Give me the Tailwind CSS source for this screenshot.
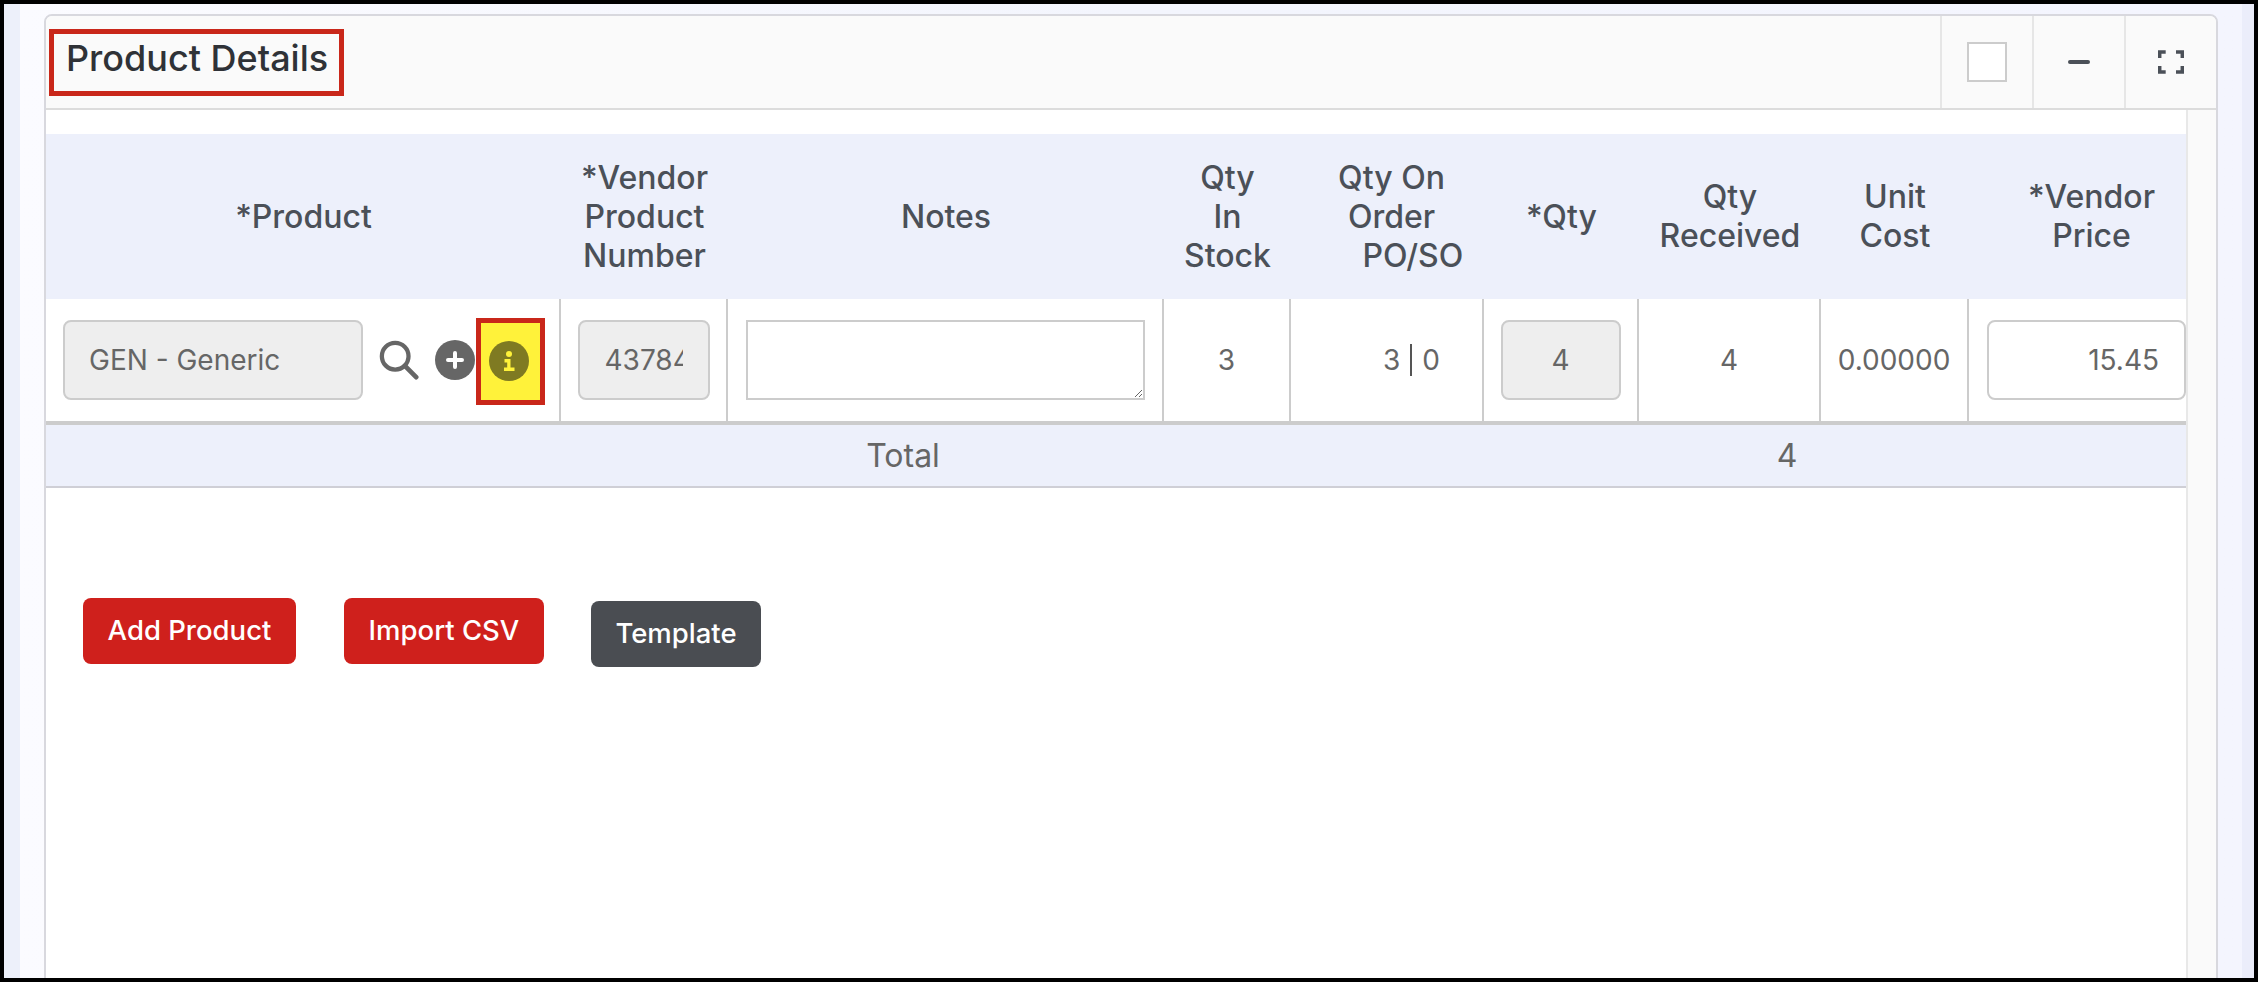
<!doctype html>
<html>
<head>
<meta charset="utf-8">
<script src="https://cdn.jsdelivr.net/npm/@tailwindcss/browser@4"></script>
</head>
<body class="m-0">
<div class="w-[2258px] h-[982px] border-4 border-black overflow-hidden flex bg-[#edf0fa] font-['Inter',sans-serif] text-[#666666]">
  <div class="w-[16px] shrink-0 bg-[#edf0fa]"></div>
  <div class="w-[2222px] shrink-0 px-[24px] pt-[10px] bg-gradient-to-r from-[#fbfbff] via-[#f3f5fd] to-[#f4f5fe]">
    <div class="w-[2174px] h-[1000px] bg-white border-2 border-[#d8d8de] rounded-t-[8px] overflow-hidden">
      <div class="h-[94px] bg-[#fafafa] border-b-2 border-[#dcdcdc] flex items-stretch">
        <div class="flex-1 flex items-center pl-[3px]">
          <h2 class="h-[67px] w-[295px] border-[5px] border-[#c9271a] flex items-center pl-[12px] pb-[8px] text-[36px] font-medium text-[#2f3237] leading-none whitespace-nowrap">Product Details</h2>
        </div>
        <div class="w-[92px] border-l-2 border-[#e6e6e6] flex items-center justify-center">
          <span class="block w-[40px] h-[40px] border-2 border-[#cccccc] bg-white"></span>
        </div>
        <div class="w-[92px] border-l-2 border-[#e6e6e6] flex items-center justify-center">
          <svg width="24" height="4" viewBox="0 0 24 4"><rect x="1" y="0" width="22" height="4" rx="2" fill="#4b5058"/></svg>
        </div>
        <div class="w-[92px] border-l-2 border-[#e6e6e6] flex items-center justify-center">
          <svg width="26" height="24" viewBox="0 0 26 24" fill="none" stroke="#4b5058" stroke-width="3.5"><path d="M1.700 8V2h6M18 2h6.300V8M1.700 16v6h6M18 22h6.300v-6"/></svg>
        </div>
      </div>
      <div class="flex h-[900px]">
        <div class="w-[2140px] shrink-0 pt-[24px]">
          <table class="w-[2140px] table-fixed border-separate border-spacing-0">
            <colgroup>
              <col class="w-[515px]"><col class="w-[167px]"><col class="w-[436px]"><col class="w-[127px]"><col class="w-[193px]"><col class="w-[155px]"><col class="w-[182px]"><col class="w-[148px]"><col class="w-[217px]">
            </colgroup>
            <thead>
              <tr class="h-[165px] bg-[#edf0fb] text-[32px] leading-[39px] font-medium text-[#4b5058] text-center">
                <th class="font-medium">*Product</th>
                <th class="font-medium">*Vendor<br>Product<br>Number</th>
                <th class="font-medium">Notes</th>
                <th class="font-medium">Qty<br>In<br>Stock</th>
                <th class="font-medium pl-[8px]">Qty On<br>Order<br>&nbsp;&nbsp;&nbsp;&nbsp;&nbsp;PO/SO</th>
                <th class="font-medium">*Qty</th>
                <th class="font-medium pb-[2px]">Qty<br>Received</th>
                <th class="font-medium pb-[2px]">Unit<br>Cost</th>
                <th class="font-medium pl-[28px] pb-[2px]">*Vendor<br>Price</th>
              </tr>
            </thead>
            <tbody>
              <tr class="h-[126px] text-[28px] text-center">
                <td class="border-r-2 border-b-4 border-[#cccccc] pl-[17px]">
                  <div class="flex items-center">
                    <input readonly value="GEN - Generic" class="w-[300px] h-[80px] bg-[#eeeeee] border-2 border-[#cccccc] rounded-[8px] pl-[24px] text-[28px] text-[#666666]">
                    <svg class="ml-[16px]" width="40" height="40" viewBox="0 0 42 42" fill="none" stroke="#666666" stroke-linecap="round"><circle cx="17" cy="17" r="14" stroke-width="4.500"/><path d="M27.500 27.500 39 39" stroke-width="5"/></svg>
                    <svg class="ml-[16px]" width="40" height="40" viewBox="0 0 40 40"><circle cx="20" cy="20" r="20" fill="#666666"/><path d="M20 13v14M13 20h14" stroke="#ffffff" stroke-width="4" stroke-linecap="round"/></svg>
                    <span class="ml-[1px] mt-[2px] w-[69px] h-[87px] border-[5px] border-[#c9271a] bg-[#fff23a] flex items-center justify-start pl-[8px]">
                      <svg width="40" height="40" viewBox="0 0 40 40"><circle cx="20" cy="20" r="20" fill="#7f7a22"/><circle cx="20" cy="13" r="3" fill="#fff23a"/><path d="M15.500 18h6v8.500h4v3.500H15v-3.500h3.200v-5h-2.700z" fill="#fff23a"/></svg>
                    </span>
                  </div>
                </td>
                <td class="border-r-2 border-b-4 border-[#cccccc]">
                  <input readonly value="437845" class="block mx-auto w-[132px] h-[80px] bg-[#eeeeee] border-2 border-[#cccccc] rounded-[8px] pl-[25px] pr-[25px] text-[28px] text-[#666666]">
                </td>
                <td class="border-r-2 border-b-4 border-[#cccccc] pl-[1px]">
                  <textarea class="block mx-auto w-[399px] h-[80px] bg-white border-2 border-[#cccccc] align-middle"></textarea>
                </td>
                <td class="border-r-2 border-b-4 border-[#cccccc]">3</td>
                <td class="border-r-2 border-b-4 border-[#cccccc]">
                  <span class="inline-flex items-center pl-[50px]"><span>3</span><span class="mx-[10px] w-[2px] h-[32px] bg-[#555555]"></span><span>0</span></span>
                </td>
                <td class="border-r-2 border-b-4 border-[#cccccc]">
                  <input readonly value="4" class="block mx-auto w-[120px] h-[80px] bg-[#eeeeee] border-2 border-[#cccccc] rounded-[8px] text-center text-[28px] text-[#666666]">
                </td>
                <td class="border-r-2 border-b-4 border-[#cccccc]">4</td>
                <td class="border-r-2 border-b-4 border-[#cccccc]">0.00000</td>
                <td class="border-b-4 border-[#cccccc] pl-[18px]">
                  <input value="15.45" class="block w-[199px] h-[80px] bg-white border-2 border-[#cccccc] rounded-[8px] pr-[25px] text-right text-[28px] text-[#666666]">
                </td>
              </tr>
            </tbody>
          </table>
          <div class="h-[63px] bg-[#edf0fb] border-b-2 border-[#cfcfd6] flex items-center text-[32px] text-[#666666]">
            <span class="w-[1714px] text-center">Total</span>
            <span class="w-[54px] text-center">4</span>
          </div>
          <div class="flex items-start pl-[37px] pt-[110px]">
            <button class="w-[213px] h-[66px] bg-[#cf201c] rounded-[8px] text-white text-[27.5px] font-medium">Add Product</button>
            <button class="ml-[48px] w-[200px] h-[66px] bg-[#cf201c] rounded-[8px] text-white text-[27.5px] font-medium">Import CSV</button>
            <button class="ml-[47px] mt-[3px] w-[170px] h-[66px] bg-[#4a4d52] rounded-[8px] text-white text-[27.5px] font-medium">Template</button>
          </div>
        </div>
        <div class="flex-1 bg-[#fafafa] border-l-2 border-[#e8e8e8]"></div>
      </div>
    </div>
  </div>
  <div class="flex-1 bg-[#ebedfa]"></div>
</div>
</body>
</html>
